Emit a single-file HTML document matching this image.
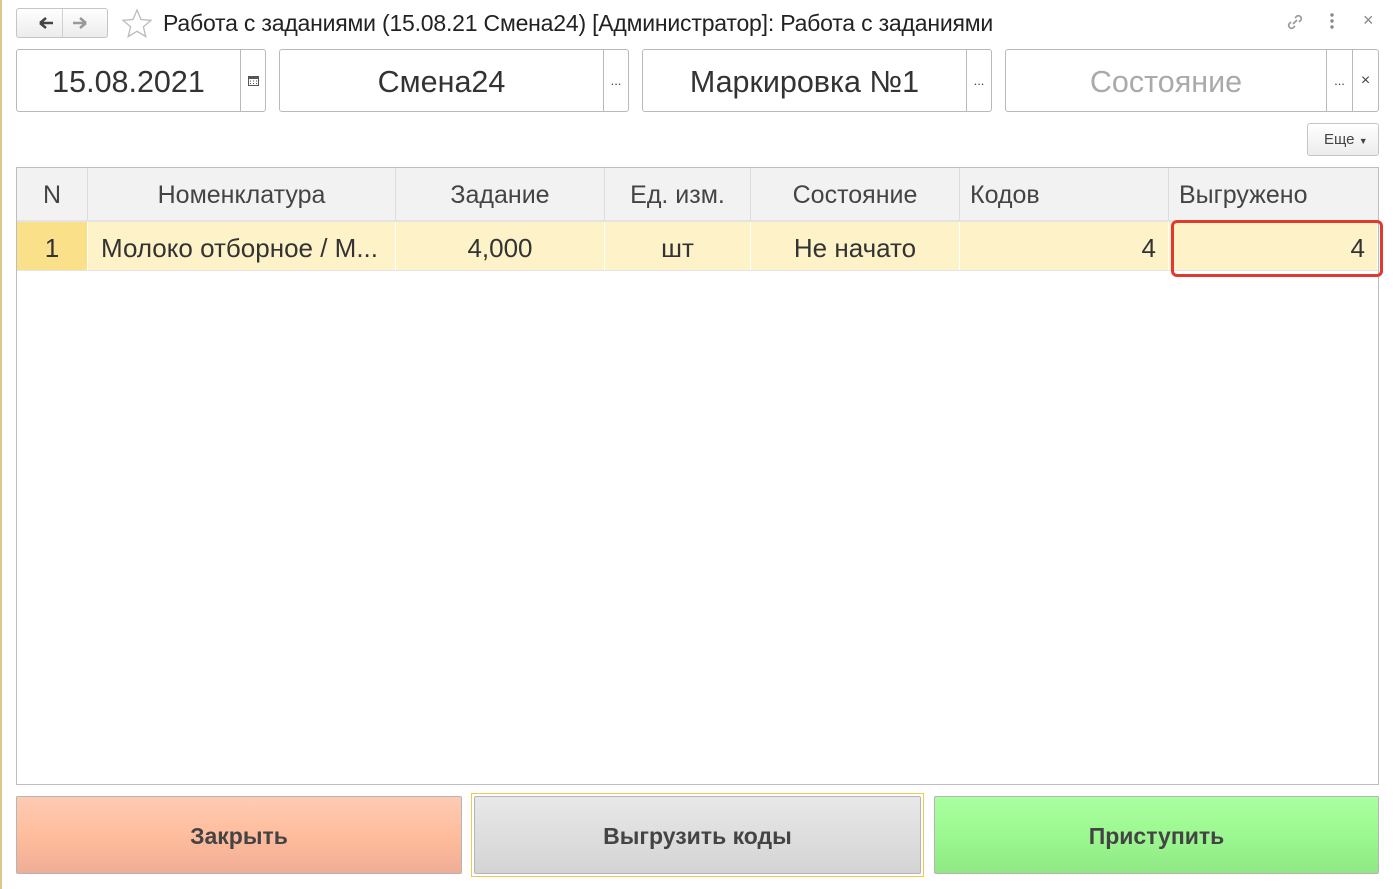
<!DOCTYPE html><html><head><meta charset="utf-8"><style>
*{box-sizing:border-box;margin:0;padding:0}
body{width:1400px;height:889px;background:#fff;font-family:"Liberation Sans",sans-serif;position:relative;overflow:hidden;color:#333}
.a{position:absolute}
.f{position:absolute;top:49px;height:63px;border:1px solid #b9b9b9;border-radius:3px;background:#fff;font-size:30.5px;color:#333}
.f .t{position:absolute;top:4px;bottom:0;display:flex;align-items:center;justify-content:center}
.f .b{position:absolute;top:0;bottom:0;border-left:1px solid #b9b9b9;display:flex;align-items:center;justify-content:center;font-size:13px;color:#444}
.th{position:absolute;top:168px;height:52px;padding-top:3px;background:#f2f2f2;border-right:1px solid #dcdcdc;font-size:25px;color:#444;display:flex;align-items:center;justify-content:center}
.td{position:absolute;top:222px;height:48px;padding-top:4px;background:#fdf2c8;border-right:1px solid #fff;font-size:26px;color:#333;display:flex;align-items:center;justify-content:center}
.btn{position:absolute;top:796px;height:78px;padding-top:3px;border:1px solid #b5b5b5;border-radius:2px;font-weight:bold;font-size:23px;color:#444;display:flex;align-items:center;justify-content:center}
</style></head><body>
<div class="a" style="left:0;top:0;width:2px;height:889px;background:#d8c98a"></div>
<div class="a" style="left:16px;top:8px;width:92px;height:30px;border:1px solid #c5c5c5;border-radius:3px;background:linear-gradient(#fff,#ececec)"></div>
<div class="a" style="left:62px;top:9px;width:1px;height:28px;background:#d0d0d0"></div>
<svg class="a" style="left:28px;top:13px" width="70" height="20"><path d="M12 10h13M12 10l6-5M12 10l6 5" stroke="#444" stroke-width="2.5" fill="none"/><path d="M58 10H45M58 10l-6-5M58 10l-6 5" stroke="#999" stroke-width="2.5" fill="none"/></svg>
<svg class="a" style="left:121px;top:8px" width="32" height="30"><path d="M16 2l4 9.5 10 .8-7.6 6.5 2.4 9.8L16 23.3 7.2 28.6l2.4-9.8L2 12.3l10-.8z" fill="none" stroke="#bbb" stroke-width="1.3"/></svg>
<div class="a" style="left:163px;top:9px;font-size:23px;color:#222;line-height:28px;letter-spacing:-0.2px">Работа с заданиями (15.08.21 Смена24) [Администратор]: Работа с заданиями</div>
<svg class="a" style="left:1284px;top:11px" width="22" height="22"><path d="M9 13l4-4M7 11l-2 2a3 3 0 0 0 4 4l2-2M15 11l2-2a3 3 0 0 0-4-4l-2 2" stroke="#999" stroke-width="1.6" fill="none"/></svg>
<svg class="a" style="left:1327px;top:12px" width="10" height="18"><circle cx="5" cy="3" r="1.7" fill="#888"/><circle cx="5" cy="9" r="1.7" fill="#888"/><circle cx="5" cy="15" r="1.7" fill="#888"/></svg>
<div class="a" style="left:1363px;top:10px;font-size:18px;color:#888">×</div>

<div class="f" style="left:16px;width:250px"><div class="t" style="left:0;width:223px">15.08.2021</div><div class="b" style="left:223px;width:25px"><svg width="11" height="11"><rect x="0.5" y="1.5" width="10" height="9" fill="none" stroke="#555"/><rect x="0.5" y="1.5" width="10" height="2.5" fill="#555"/><path d="M2 6h1M5 6h1M8 6h1M2 8.5h1M5 8.5h1M8 8.5h1" stroke="#555"/></svg></div></div>
<div class="f" style="left:279px;width:350px"><div class="t" style="left:0;width:323px">Смена24</div><div class="b" style="left:323px;width:25px">...</div></div>
<div class="f" style="left:642px;width:350px"><div class="t" style="left:0;width:323px">Маркировка №1</div><div class="b" style="left:323px;width:25px">...</div></div>
<div class="f" style="left:1005px;width:374px"><div class="t" style="left:0;width:320px;color:#aaa">Состояние</div><div class="b" style="left:320px;width:26px">...</div><div class="b" style="left:346px;width:26px;font-size:16px">×</div></div>

<div class="a" style="left:1307px;top:123px;width:72px;height:33px;border:1px solid #c5c5c5;border-radius:3px;background:linear-gradient(#fff,#ececec);font-size:15px;color:#444;line-height:31px;padding-left:16px">Еще <span style="font-size:9px">▼</span></div>

<div class="a" style="left:16px;top:167px;width:1363px;height:618px;border:1px solid #bdbdbd"></div>
<div class="th" style="left:17px;width:71px">N</div>
<div class="th" style="left:88px;width:308px">Номенклатура</div>
<div class="th" style="left:396px;width:209px">Задание</div>
<div class="th" style="left:605px;width:146px">Ед. изм.</div>
<div class="th" style="left:751px;width:209px">Состояние</div>
<div class="th" style="left:960px;width:209px;justify-content:flex-start;padding-left:10px">Кодов</div>
<div class="th" style="left:1169px;width:209px;justify-content:flex-start;padding-left:10px;border-right:0">Выгружено</div>
<div class="a" style="left:17px;top:220px;width:1361px;height:2px;background:#e4e4e4"></div>
<div class="td" style="left:17px;width:71px;background:#fbe08a">1</div>
<div class="td" style="left:88px;width:308px;justify-content:flex-start;padding-left:13px">Молоко отборное / М...</div>
<div class="td" style="left:396px;width:209px">4,000</div>
<div class="td" style="left:605px;width:146px">шт</div>
<div class="td" style="left:751px;width:209px">Не начато</div>
<div class="td" style="left:960px;width:209px;justify-content:flex-end;padding-right:12px">4</div>
<div class="td" style="left:1169px;width:209px;justify-content:flex-end;padding-right:12px">4</div>
<div class="a" style="left:17px;top:270px;width:1361px;height:1px;background:#e4e4e4"></div>
<div class="a" style="left:1171px;top:220px;width:212px;height:57px;border:3.5px solid #e0392f;border-radius:6px"></div>

<div class="btn" style="left:16px;width:446px;background:linear-gradient(#fecbb3,#ffbd9d 50%,#f0ad96)">Закрыть</div>
<div class="a" style="left:471px;top:793px;width:453px;height:84px;border:1px solid #f0c94a"></div>
<div class="btn" style="left:474px;width:447px;background:linear-gradient(#e8e8e8,#d4d4d4)">Выгрузить коды</div>
<div class="btn" style="left:934px;width:445px;background:linear-gradient(#aaffa0,#9cf890 50%,#8fe884)">Приступить</div>
</body></html>
